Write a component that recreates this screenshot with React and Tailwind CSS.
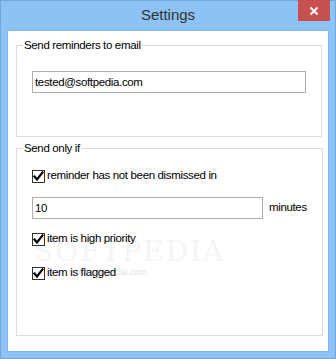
import React from 'react';

const Check = () => (
    <span className="w-[13px] h-[13px] border border-[#333333] bg-white flex items-center justify-center shrink-0">
        <svg width="11" height="11" viewBox="0 0 11 11">
            <path d="M1.5 5.5 L4 8.5 L9.5 1.5" fill="none" stroke="#000" strokeWidth="2.2" strokeLinecap="square" />
        </svg>
    </span>
);

const CheckRow = ({ label }) => (
    <label className="flex items-center gap-[2px] h-[16px] relative">
        <Check />
        <span>{label}</span>
    </label>
);

export default function App() {
    return (
        <div className="w-[336px] h-[359px] bg-[#8cc3f4] border border-[#6ea7dd] flex flex-col font-['Liberation_Sans',sans-serif] text-[11.5px] tracking-[-0.35px] text-black relative">
            {/* title bar */}
            <div className="h-[30px] flex items-center justify-center relative">
                <span className="text-[15px] tracking-normal text-[#333] -mt-[1px]">Settings</span>
                <button className="absolute -top-[1px] right-[5px] w-[32px] h-[21px] bg-[#c75050] flex items-center justify-center">
                    <svg width="10" height="10" viewBox="0 0 10 10">
                        <path d="M1.5 1.5 L8.5 8.5 M8.5 1.5 L1.5 8.5" stroke="#fff" strokeWidth="2" />
                    </svg>
                </button>
            </div>

            {/* client area */}
            <div className="ml-[7px] w-[320px] h-[320px] bg-white shadow-[0_0_0_1px_#7fb6ea] px-[8px] pt-[6px] flex flex-col">
                <fieldset className="border border-[#dcdcdc] h-[100px] px-[15px] pt-[18px]">
                    <legend className="-ml-[9px] px-[1px] leading-[16px]">Send reminders to email</legend>
                    <input
                        className="w-[274px] h-[22px] border border-[#abadb3] px-[2px] outline-none"
                        defaultValue="tested@softpedia.com"
                    />
                </fieldset>

                <fieldset className="border border-[#dcdcdc] h-[196px] mt-[3px] px-[15px] pt-[12px] relative">
                    <legend className="-ml-[9px] px-[1px] leading-[16px]">Send only if</legend>
                    {/* watermark */}
                    <div className="absolute left-[17px] top-[82px] text-[28px] tracking-[2px] text-[#f5f5f5] font-['DejaVu_Serif',serif] pointer-events-none select-none leading-none">
                        SOFTPEDIA
                    </div>
                    <div className="absolute left-[52px] top-[110px] text-[9px] tracking-normal text-[#e2e2e2] pointer-events-none select-none">
                        www.softpedia.com
                    </div>
                    <div className="flex flex-col relative">
                        <CheckRow label="reminder has not been dismissed in" />
                        <div className="flex items-center mt-[13px]">
                            <input className="w-[231px] h-[22px] border border-[#abadb3] px-[2px] outline-none" defaultValue="10" />
                            <span className="ml-[6px]">minutes</span>
                        </div>
                        <div className="mt-[12px]">
                            <CheckRow label="item is high priority" />
                        </div>
                        <div className="mt-[18px]">
                            <CheckRow label="item is flagged" />
                        </div>
                    </div>
                </fieldset>
            </div>
        </div>
    );
}
